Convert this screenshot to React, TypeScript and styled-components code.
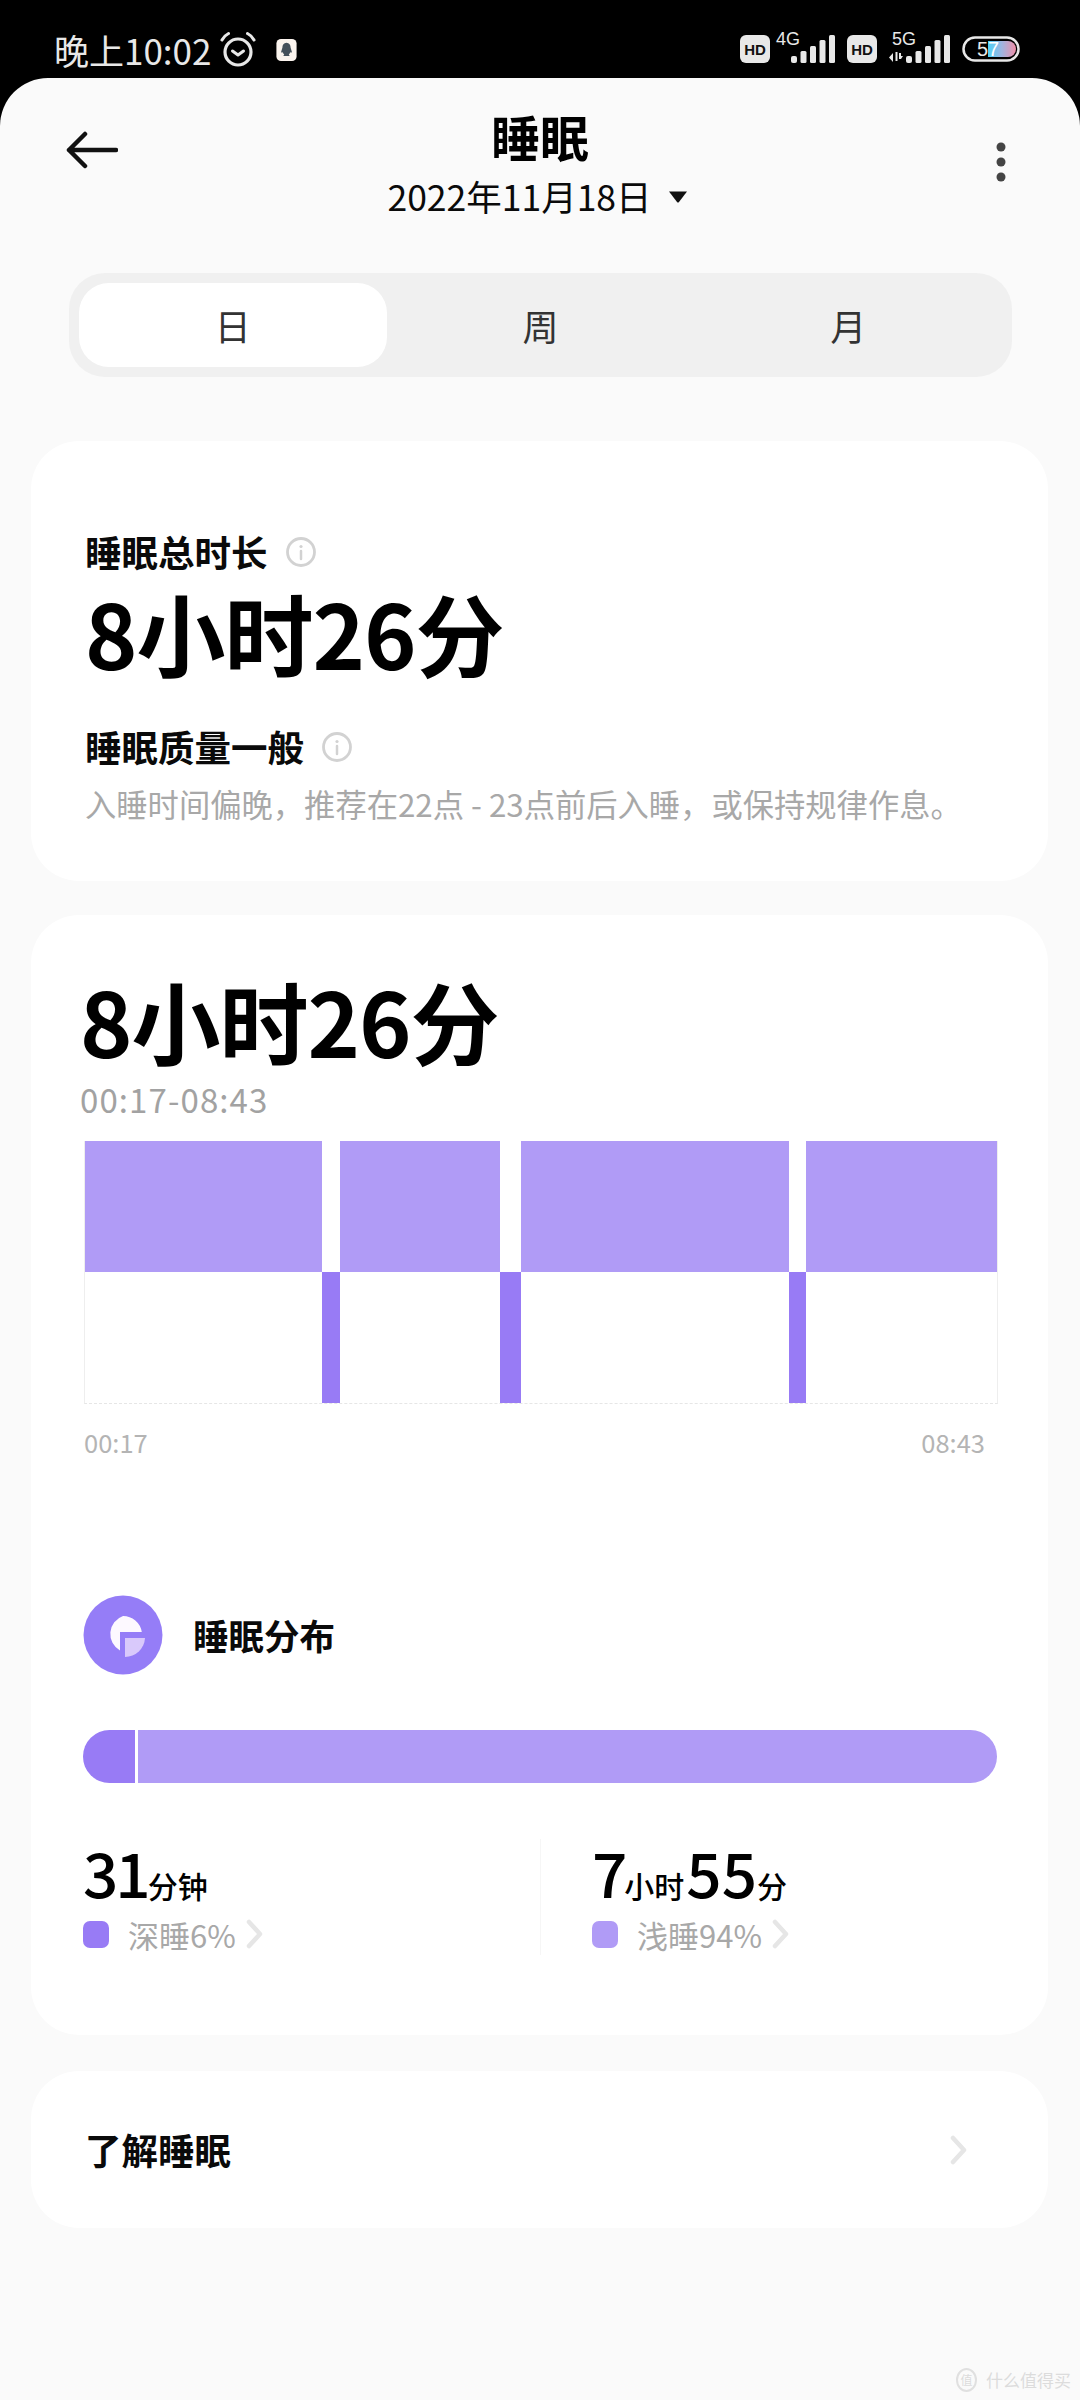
import { FC } from 'react'
import styled, { createGlobalStyle } from 'styled-components'

const GlobalStyle = createGlobalStyle`
    html, body {
        margin: 0;
        padding: 0;
        background: #000;
    }
    * {
        box-sizing: border-box;
    }
    body {
        font-family: "Noto Sans CJK SC", "Noto Sans", sans-serif;
    }
`

const Screen = styled.div`
    width: 1080px;
    height: 2400px;
    background: #000;
    display: flex;
    flex-direction: column;
    overflow: hidden;
`

const StatusBar = styled.div`
    height: 78px;
    flex: none;
    display: flex;
    align-items: center;
    justify-content: space-between;
    padding: 22px 60px 0 54px;
    color: #e8e8e8;
`

const StatusLeft = styled.div`
    display: flex;
    align-items: center;
`

const StatusRight = styled.div`
    display: flex;
    align-items: flex-end;
    gap: 12px;
    padding-bottom: 8px;
`

const NetworkPair = styled.div<{ $gap: number }>`
    display: flex;
    align-items: flex-end;
    gap: ${(p) => p.$gap}px;
`

const Clock = styled.span`
    font-size: 35px;
    line-height: 50px;
    margin-right: 8px;
`

const QQSvg = styled.svg`
    margin-left: 19px;
`

const BatterySvg = styled.svg`
    margin-bottom: 1px;
`

const Sheet = styled.div`
    position: relative;
    flex: 1;
    background: #fafafa;
    border-radius: 48px 48px 0 0;
    padding: 0 31px;
    display: flex;
    flex-direction: column;
`

const Header = styled.header`
    height: 195px;
    flex: none;
    display: grid;
    grid-template-columns: 1fr auto 1fr;
    align-items: start;
    padding: 25px 35px 0;
`

const BackSlot = styled.div`
    margin-top: 28px;
`

const MoreSlot = styled.div`
    justify-self: end;
    margin: 39px 7px 0 0;
`

const HeaderCenter = styled.div`
    display: flex;
    flex-direction: column;
    align-items: center;
`

const Title = styled.h1`
    margin: 0;
    font-size: 49px;
    line-height: 66px;
    font-weight: 700;
    color: #000;
`

const DateRow = styled.div`
    display: flex;
    align-items: center;
    gap: 16px;
    margin: 2px 5px 0 0;
    font-size: 35.500px;
    line-height: 50px;
    color: #0a0a0a;
`

const Tabs = styled.div`
    flex: none;
    width: 943px;
    height: 104px;
    margin: 0 0 64px 38px;
    padding: 10px;
    background: #f0f0f0;
    border-radius: 36px;
    display: grid;
    grid-template-columns: repeat(3, 1fr);
`

const Tab = styled.div<{ $active?: boolean }>`
    display: flex;
    align-items: center;
    justify-content: center;
    height: 84px;
    border-radius: 30px;
    font-size: 36px;
    color: #333;
    background: ${(p) => (p.$active ? '#fff' : 'transparent')};
`

const Card = styled.section`
    flex: none;
    width: 1017px;
    background: #fff;
    border-radius: 48px;
`

const SummaryCard = styled(Card)`
    height: 440px;
    margin-bottom: 34px;
    padding: 86px 54px 0;
`

const LabelRow = styled.div`
    display: flex;
    align-items: center;
    gap: 18px;
    font-size: 36.500px;
    line-height: 50px;
    font-weight: 700;
    color: #0a0a0a;
`

const BigValue = styled.div`
    font-size: 89px;
    line-height: 110px;
    font-weight: 700;
    color: #000;
    letter-spacing: -1px;
`

const QualityRow = styled(LabelRow)`
    margin-top: 35px;
`

const SummaryNote = styled.p`
    margin: 10px 0 0;
    font-size: 31.300px;
    line-height: 44px;
    color: #a8a8a8;
    white-space: nowrap;
`

const DetailCard = styled(Card)`
    height: 1120px;
    margin-bottom: 36px;
    padding: 50px 52px 0 49px;
`

const TimeRange = styled.div`
    font-size: 33px;
    line-height: 44px;
    letter-spacing: 1.100px;
    color: #a2a2a2;
    margin-top: 2px;
`

const Chart = styled.div`
    display: flex;
    width: 914px;
    height: 263px;
    margin: 20px 0 0 4px;
    border-left: 1px solid #eeeeee;
    border-right: 1px solid #eeeeee;
    border-bottom: 1px dashed #e6e6e6;
`

const ChartSegment = styled.div<{ $deep?: boolean }>`
    height: 100%;
    display: flex;
    flex-direction: column;
    justify-content: ${(p) => (p.$deep ? 'flex-end' : 'flex-start')};

    &::before {
        content: '';
        display: block;
        height: 131px;
        background: ${(p) => (p.$deep ? '#987bf5' : '#b09bf6')};
    }
`

const ChartAxis = styled.div`
    display: flex;
    justify-content: space-between;
    width: 914px;
    margin: 20px 0 0 4px;
    padding-right: 13px;
    font-size: 25.500px;
    line-height: 36px;
    color: #b4b4b4;
`

const SectionHead = styled.div`
    display: flex;
    align-items: center;
    gap: 30px;
    margin: 135px 0 0 3px;
    font-size: 35.500px;
    line-height: 80px;
    font-weight: 700;
    color: #0a0a0a;
`

const Split = styled.div`
    display: flex;
    gap: 3px;
    width: 914px;
    height: 53px;
    margin: 55px 0 0 3px;
    border-radius: 27px;
    overflow: hidden;
`

const DeepPart = styled.div`
    width: 52px;
    background: #987bf5;
`

const LightPart = styled.div`
    flex: 1;
    background: #b09bf6;
`

const Stats = styled.div`
    display: grid;
    grid-template-columns: 457px 1fr;
    margin: 56px 0 0 3px;
`

const Stat = styled.div<{ $divided?: boolean }>`
    height: 116px;
    padding-left: ${(p) => (p.$divided ? '51px' : '0')};
    border-left: ${(p) => (p.$divided ? '1px solid #f6f6f6' : 'none')};
`

const StatValue = styled.div`
    display: flex;
    align-items: baseline;
    height: 64px;
    color: #000;
`

const Num = styled.span<{ $tight?: boolean }>`
    font-size: 62px;
    line-height: 64px;
    font-weight: 500;
    letter-spacing: ${(p) => (p.$tight ? '-3px' : '0')};
`

const Unit = styled.span`
    font-size: 30px;
    line-height: 64px;
    font-weight: 500;
    margin-right: 2px;
`

const StatLegend = styled.div`
    display: flex;
    align-items: center;
    height: 44px;
    margin-top: 9px;
    font-size: 31px;
    color: #a8a8a8;
`

const LegendText = styled.span`
    margin-right: 10px;
`

const Swatch = styled.i<{ $deep?: boolean }>`
    width: 26px;
    height: 27px;
    margin-right: 19px;
    border-radius: 7px;
    background: ${(p) => (p.$deep ? '#987bf5' : '#b09bf6')};
`

const LinkCard = styled(Card)`
    height: 157px;
    display: flex;
    align-items: center;
    justify-content: space-between;
    padding: 0 81px 0 54px;
    font-size: 36.500px;
    font-weight: 700;
    color: #0a0a0a;
`

const Watermark = styled.div`
    position: absolute;
    right: 9px;
    bottom: 8px;
    display: flex;
    align-items: center;
    gap: 9px;
    font-size: 17px;
    line-height: 24px;
    color: #dcdcdc;
`

const WatermarkBadge = styled.span`
    display: flex;
    align-items: center;
    justify-content: center;
    width: 21px;
    height: 24px;
    font-size: 12px;
    border: 2px solid #e0e0e0;
    border-radius: 50%;
`

const AlarmIcon: FC = () => (
    <svg width="38" height="38" viewBox="0 0 38 38" fill="none" stroke="#e8e8e8" strokeLinecap="round">
        <circle cx="19" cy="21" r="13" strokeWidth="3.200" />
        <path d="M13.500 20l5.500 4 5.500-4" strokeWidth="3" strokeLinejoin="round" />
        <path d="M3 9c1.500-3 3.500-5 6.500-6.500M35 9c-1.500-3-3.500-5-6.500-6.500" strokeWidth="3" />
    </svg>
)

const QQIcon: FC = () => (
    <QQSvg width="21" height="22" viewBox="0 0 22 24">
        <rect width="22" height="24" rx="5" fill="#fbf4ee" />
        <path d="M11 4c3 0 4.500 2.500 4.500 5.500l1.500 5-1.500.5-.5-1c-.2 1.500-.7 2.500-1.500 3l1 1.500H7.500l1-1.500c-.8-.5-1.300-1.500-1.500-3l-.5 1L5 14.500l1.500-5C6.500 6.500 8 4 11 4z" fill="#44505a" />
    </QQSvg>
)

const HdBadge: FC = () => (
    <svg width="30" height="28" viewBox="0 0 30 28">
        <rect width="30" height="28" rx="6" fill="#e8e8e8" />
        <text x="15" y="19.500" textAnchor="middle" fontSize="15" fontWeight="700" fontFamily="Liberation Sans" fill="#111">HD</text>
    </svg>
)

const SignalBars: FC<{ x: number }> = ({ x }) => (
    <g transform={`translate(${x} 0)`}>
        <rect x="0" y="23" width="6" height="7" rx="2" />
        <rect x="9.500" y="18" width="6" height="12" rx="1.500" />
        <rect x="19" y="13" width="6" height="17" rx="1.500" />
        <rect x="28.500" y="7" width="6" height="23" rx="1.500" />
        <rect x="38" y="2" width="6" height="28" rx="1.500" />
    </g>
)

const Signal4G: FC = () => (
    <svg width="60" height="34" viewBox="0 -4 60 34" fill="#e8e8e8">
        <text x="1" y="12" fontSize="18" fontFamily="Liberation Sans">4G</text>
        <SignalBars x={16} />
    </svg>
)

const Signal5G: FC = () => (
    <svg width="64" height="34" viewBox="0 -4 64 34" fill="#e8e8e8">
        <text x="6" y="12" fontSize="18" fontFamily="Liberation Sans">5G</text>
        <path d="M7 20v9l-4-4.500zM9.500 19h2v9h-2zM13 20h2v3h2l-2 3h-2z" />
        <SignalBars x={20} />
    </svg>
)

const BatteryIcon: FC = () => (
    <BatterySvg width="58" height="26" viewBox="0 0 58 26">
        <defs>
            <linearGradient id="battery" x1="0" x2="1">
                <stop offset="0" stopColor="#4fd2f8" />
                <stop offset="0.5" stopColor="#a0b4e0" />
                <stop offset="1" stopColor="#f08fa8" />
            </linearGradient>
        </defs>
        <rect x="1.500" y="1.500" width="55" height="23" rx="11.500" fill="none" stroke="#e8e8e8" strokeWidth="2.500" />
        <path d="M26 5h20a8 8 0 0 1 0 16H26z" fill="url(#battery)" />
        <text x="15" y="20" fontSize="20" fontFamily="Liberation Sans" fill="#e8e8e8">5</text>
        <text x="26" y="20" fontSize="20" fontFamily="Liberation Sans" fill="#fff">7</text>
    </BatterySvg>
)

const BackArrow: FC = () => (
    <svg width="52" height="38" viewBox="0 0 52 38" fill="none" stroke="#111" strokeWidth="4.500" strokeLinecap="round" strokeLinejoin="round">
        <path d="M50 19H3M19 3L3 19l16 16" />
    </svg>
)

const MoreIcon: FC = () => (
    <svg width="12" height="40" viewBox="0 0 12 40" fill="#444">
        <circle cx="6" cy="5" r="4.500" />
        <circle cx="6" cy="20" r="4.500" />
        <circle cx="6" cy="35" r="4.500" />
    </svg>
)

const Caret: FC = () => (
    <svg width="20" height="13" viewBox="0 0 20 13" fill="#111">
        <path d="M1 1.500h18L11 12q-1 1-2 0z" />
    </svg>
)

const InfoIcon: FC = () => (
    <svg width="30" height="30" viewBox="0 0 30 30" fill="none">
        <circle cx="15" cy="15" r="13.500" stroke="#d2d2d2" strokeWidth="2.800" />
        <circle cx="15" cy="9.500" r="1.600" fill="#d2d2d2" />
        <path d="M15 14v8" stroke="#d2d2d2" strokeWidth="2.500" strokeLinecap="round" />
    </svg>
)

const Chevron: FC = () => (
    <svg width="17" height="30" viewBox="0 0 17 30" fill="none" stroke="#e6e6e6" strokeWidth="4.500" strokeLinecap="round" strokeLinejoin="round">
        <path d="M3 3l11 12L3 27" />
    </svg>
)

const DistributionIcon: FC = () => (
    <svg width="80" height="80" viewBox="0 0 80 80">
        <circle cx="40" cy="40" r="39.500" fill="#957df7" />
        <path d="M40 21a19 19 0 0 1 18.800 16H37v18.500A19 19 0 0 1 40 21z" fill="#fdf9ff" />
        <path d="M42 43h20a20 20 0 0 1-20 19z" fill="#d9c9fb" />
    </svg>
)

const segments = [
    { width: 237 },
    { width: 18, deep: true },
    { width: 160 },
    { width: 21, deep: true },
    { width: 268 },
    { width: 17, deep: true },
    { width: 191 },
]

const App: FC = () => {
    return (
        <Screen>
            <GlobalStyle />
            <StatusBar>
                <StatusLeft>
                    <Clock>晚上10:02</Clock>
                    <AlarmIcon />
                    <QQIcon />
                </StatusLeft>
                <StatusRight>
                    <NetworkPair $gap={5}>
                        <HdBadge />
                        <Signal4G />
                    </NetworkPair>
                    <NetworkPair $gap={9}>
                        <HdBadge />
                        <Signal5G />
                    </NetworkPair>
                    <BatteryIcon />
                </StatusRight>
            </StatusBar>
            <Sheet>
                <Header>
                    <BackSlot>
                        <BackArrow />
                    </BackSlot>
                    <HeaderCenter>
                        <Title>睡眠</Title>
                        <DateRow>
                            2022年11月18日
                            <Caret />
                        </DateRow>
                    </HeaderCenter>
                    <MoreSlot>
                        <MoreIcon />
                    </MoreSlot>
                </Header>
                <Tabs>
                    <Tab $active>日</Tab>
                    <Tab>周</Tab>
                    <Tab>月</Tab>
                </Tabs>
                <SummaryCard>
                    <LabelRow>
                        睡眠总时长
                        <InfoIcon />
                    </LabelRow>
                    <BigValue>8小时26分</BigValue>
                    <QualityRow>
                        睡眠质量一般
                        <InfoIcon />
                    </QualityRow>
                    <SummaryNote>入睡时间偏晚，推荐在22点 - 23点前后入睡，或保持规律作息。</SummaryNote>
                </SummaryCard>
                <DetailCard>
                    <BigValue>8小时26分</BigValue>
                    <TimeRange>00:17-08:43</TimeRange>
                    <Chart>
                        {segments.map((s, i) => (
                            <ChartSegment key={i} $deep={s.deep} style={{ width: s.width }} />
                        ))}
                    </Chart>
                    <ChartAxis>
                        <span>00:17</span>
                        <span>08:43</span>
                    </ChartAxis>
                    <SectionHead>
                        <DistributionIcon />
                        睡眠分布
                    </SectionHead>
                    <Split>
                        <DeepPart />
                        <LightPart />
                    </Split>
                    <Stats>
                        <Stat>
                            <StatValue>
                                <Num $tight>31</Num>
                                <Unit>分钟</Unit>
                            </StatValue>
                            <StatLegend>
                                <Swatch $deep />
                                <LegendText>深睡6%</LegendText>
                                <Chevron />
                            </StatLegend>
                        </Stat>
                        <Stat $divided>
                            <StatValue>
                                <Num $tight>7</Num>
                                <Unit>小时</Unit>
                                <Num>55</Num>
                                <Unit>分</Unit>
                            </StatValue>
                            <StatLegend>
                                <Swatch />
                                <LegendText>浅睡94%</LegendText>
                                <Chevron />
                            </StatLegend>
                        </Stat>
                    </Stats>
                </DetailCard>
                <LinkCard>
                    了解睡眠
                    <Chevron />
                </LinkCard>
                <Watermark>
                    <WatermarkBadge>值</WatermarkBadge>
                    什么值得买
                </Watermark>
            </Sheet>
        </Screen>
    )
}

export default App
